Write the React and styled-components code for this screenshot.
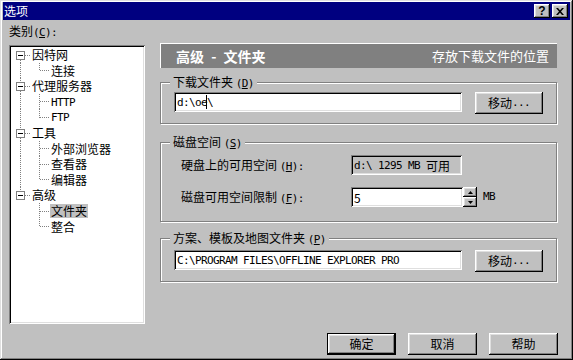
import React from 'react';
import styled, { createGlobalStyle } from 'styled-components';

const GlobalStyle = createGlobalStyle`
  body {
    margin: 0;
    background: #c0c0c0;
    font-family: "Noto Sans CJK SC", "Liberation Sans", sans-serif;
    font-size: 12px;
    color: #000;
  }
`;

const raised = `
  box-shadow: inset -1px -1px #000, inset 1px 1px #fff,
    inset -2px -2px #808080, inset 2px 2px #dfdfdf;
`;

const sunken = `
  box-shadow: inset 1px 1px #808080, inset -1px -1px #fff,
    inset 2px 2px #000, inset -2px -2px #dfdfdf;
`;

const Window = styled.div`
  width: 573px;
  height: 360px;
  box-sizing: border-box;
  padding: 2px 3px 3px 3px;
  background: #c0c0c0;
  box-shadow: inset -1px -1px #000, inset 1px 1px #dfdfdf,
    inset -2px -2px #808080, inset 2px 2px #fff;
  display: flex;
  flex-direction: column;
`;

const TitleBar = styled.div`
  height: 18px;
  display: flex;
  align-items: center;
  background: #000080;
  color: #fff;
  padding-left: 1px;
  line-height: 18px;
`;

const TitleButtons = styled.div`
  margin-left: auto;
  margin-right: 2px;
  display: flex;
  gap: 2px;
`;

const TitleButton = styled.div`
  width: 16px;
  height: 14px;
  background: #c0c0c0;
  ${raised}
  display: flex;
  align-items: center;
  justify-content: center;
  color: #000;
  font-family: "Liberation Sans", sans-serif;
  font-weight: bold;
  font-size: 12px;
  line-height: 14px;
`;

const Body = styled.div`
  display: flex;
  gap: 15px;
  padding-left: 6px;
`;

const LeftCol = styled.div`
  width: 136px;
  display: flex;
  flex-direction: column;
`;

const CatLabel = styled.div`
  margin: 4px 0 5px 0;
  line-height: 14px;
`;

const Tree = styled.div`
  height: 279px;
  box-sizing: border-box;
  padding: 2px;
  background: #fff;
  ${sunken}
`;

const TreeRow = styled.div`
  display: flex;
  align-items: center;
  height: ${(p) => p.$h}px;
`;

const TreeText = styled.span`
  line-height: 14px;
  padding: 0 1px;
  margin-left: -1px;
  background: ${(p) => (p.$selected ? '#c0c0c0' : 'transparent')};
`;

const Mono = styled.span`
  font-family: "DejaVu Sans Mono", "Liberation Mono", "Noto Sans CJK SC", monospace;
  font-size: 11px;
  letter-spacing: -0.62px;
`;

const RightCol = styled.div`
  width: 397px;
  padding-top: 23px;
  display: flex;
  flex-direction: column;
`;

const Header = styled.div`
  height: 25px;
  box-sizing: border-box;
  background: #808080;
  box-shadow: inset 1px 1px #fff;
  color: #fff;
  display: flex;
  align-items: center;
  padding: 0 8px 0 16px;
`;

const HeaderTitle = styled.span`
  font-size: 14px;
  font-weight: bold;
  word-spacing: 4px;
`;

const HeaderNote = styled.span`
  margin-left: auto;
  font-size: 13px;
`;

const Group = styled.div`
  margin-top: ${(p) => p.$top}px;
  border: 1px solid #808080;
  box-shadow: inset 1px 1px #fff, 1px 1px #fff;
  padding: 0 13px ${(p) => p.$bottom}px 13px;
  display: flex;
  flex-direction: column;
`;

const GroupLabel = styled.div`
  width: fit-content;
  margin: -8px 0 0 -4px;
  padding: 0 3px;
  background: #c0c0c0;
  line-height: 14px;
  height: 14px;
`;

const Row = styled.div`
  display: flex;
  align-items: flex-start;
  margin-top: ${(p) => p.$top}px;
  padding-left: ${(p) => p.$indent || 0}px;
`;

const FieldLabel = styled.div`
  width: 170px;
  line-height: 20px;
`;

const Field = styled.div`
  width: ${(p) => p.$w}px;
  height: 20px;
  box-sizing: border-box;
  padding: 0 3px;
  display: flex;
  align-items: center;
  background: ${(p) => (p.$readonly ? '#c0c0c0' : '#fff')};
  ${sunken}
  white-space: pre;
`;

const Caret = styled.span`
  display: inline-block;
  width: 1px;
  height: 14px;
  background: #000;
  margin-left: -1px;
`;

const Button = styled.div`
  width: ${(p) => p.$w || 68}px;
  height: 22px;
  box-sizing: border-box;
  margin-left: ${(p) => p.$gap || 0}px;
  background: #c0c0c0;
  ${raised}
  ${(p) => p.$default && 'border: 1px solid #000;'}
  display: flex;
  align-items: center;
  justify-content: center;
  line-height: 20px;
`;

const Spin = styled.div`
  display: flex;
  flex-direction: column;
`;

const SpinButton = styled.div`
  width: 14px;
  height: 10px;
  box-sizing: border-box;
  background: #c0c0c0;
  ${raised}
  display: flex;
  align-items: center;
  justify-content: center;
`;

const Unit = styled(Mono)`
  margin-left: 6px;
  line-height: 20px;
`;

const Footer = styled.div`
  margin: 51px -1px 0 0;
  display: flex;
  justify-content: flex-end;
  gap: 12px;
`;

const Key = ({ k }) => (
  <Mono>
    (<u>{k}</u>)
  </Mono>
);

const tree = [
  { label: '因特网', children: ['连接'] },
  { label: '代理服务器', children: ['HTTP', 'FTP'] },
  { label: '工具', children: ['外部浏览器', '查看器', '编辑器'] },
  { label: '高级', children: ['文件夹', '整合'] },
];

const dot = { stroke: '#808080', strokeDasharray: '1 1', shapeRendering: 'crispEdges' };

function TopLines({ h, first, last }) {
  const cy = Math.floor(h / 2) + 0.5;
  return (
    <svg width="21" height={h} style={{ flex: 'none' }}>
      {!first && <line x1="9.5" y1="0" x2="9.5" y2={cy - 4.5} style={dot} />}
      {!last && <line x1="9.5" y1={cy + 4.5} x2="9.5" y2={h} style={dot} />}
      <line x1="14" y1={cy} x2="20" y2={cy} style={dot} />
      <rect x="5.5" y={cy - 4} width="8" height="8" fill="#fff" stroke="#808080" shapeRendering="crispEdges" />
      <rect x="7" y={cy - 0.5} width="5" height="1" fill="#000" />
    </svg>
  );
}

function ChildLines({ h, parentLast, lastChild }) {
  const cy = Math.floor(h / 2) + 0.5;
  return (
    <svg width="40" height={h} style={{ flex: 'none' }}>
      {!parentLast && <line x1="9.5" y1="0" x2="9.5" y2={h} style={dot} />}
      <line x1="28.5" y1="0" x2="28.5" y2={lastChild ? cy : h} style={dot} />
      <line x1="29" y1={cy} x2="38" y2={cy} style={dot} />
    </svg>
  );
}

function TreeView() {
  const rows = [];
  let i = 0;
  const rowH = () => {
    const h = Math.round((i + 1) * 15.6) - Math.round(i * 15.6);
    i += 1;
    return h;
  };
  tree.forEach((node, n) => {
    const last = n === tree.length - 1;
    const h = rowH();
    rows.push(
      <TreeRow key={node.label} $h={h}>
        <TopLines h={h} first={n === 0} last={last} />
        <TreeText>{node.label}</TreeText>
      </TreeRow>
    );
    node.children.forEach((c, k) => {
      const ch = rowH();
      const latin = /^[A-Z]+$/.test(c);
      rows.push(
        <TreeRow key={c} $h={ch}>
          <ChildLines h={ch} parentLast={last} lastChild={k === node.children.length - 1} />
          <TreeText $selected={c === '文件夹'}>{latin ? <Mono>{c}</Mono> : c}</TreeText>
        </TreeRow>
      );
    });
  });
  return <Tree>{rows}</Tree>;
}

export default function App() {
  return (
    <>
      <GlobalStyle />
      <Window>
        <TitleBar>
          <span>选项</span>
          <TitleButtons>
            <TitleButton>?</TitleButton>
            <TitleButton>
              <svg width="8" height="7" viewBox="0 0 8 7">
                <path d="M0 0 L2 0 L4 2.2 L6 0 L8 0 L5 3.5 L8 7 L6 7 L4 4.8 L2 7 L0 7 L3 3.5 Z" fill="#000" />
              </svg>
            </TitleButton>
          </TitleButtons>
        </TitleBar>
        <Body>
          <LeftCol>
            <CatLabel>
              类别<Key k="C" />
              <Mono>:</Mono>
            </CatLabel>
            <TreeView />
          </LeftCol>
          <RightCol>
            <Header>
              <HeaderTitle>高级 - 文件夹</HeaderTitle>
              <HeaderNote>存放下载文件的位置</HeaderNote>
            </Header>

            <Group $top={14} $bottom={9}>
              <GroupLabel>
                下载文件夹 <Key k="D" />
              </GroupLabel>
              <Row $top={3}>
                <Field $w={288}>
                  <Mono>d:\oe</Mono>
                  <Caret />
                  <Mono>\</Mono>
                </Field>
                <Button $gap={13}>
                  移动<Mono>...</Mono>
                </Button>
              </Row>
            </Group>

            <Group $top={18} $bottom={12}>
              <GroupLabel>
                磁盘空间 <Key k="S" />
              </GroupLabel>
              <Row $top={6} $indent={7}>
                <FieldLabel>
                  硬盘上的可用空间 <Key k="H" />
                  <Mono>:</Mono>
                </FieldLabel>
                <Field $w={111} $readonly>
                  <Mono>d:\ 1295 MB </Mono>可用
                </Field>
              </Row>
              <Row $top={10} $indent={7}>
                <FieldLabel>
                  磁盘可用空间限制 <Key k="F" />
                  <Mono>:</Mono>
                </FieldLabel>
                <Field $w={112}>5</Field>
                <Spin>
                  <SpinButton>
                    <svg width="5" height="3" viewBox="0 0 5 3">
                      <path d="M2.5 0 L5 3 L0 3 Z" fill="#000" />
                    </svg>
                  </SpinButton>
                  <SpinButton>
                    <svg width="5" height="3" viewBox="0 0 5 3">
                      <path d="M0 0 L5 0 L2.5 3 Z" fill="#000" />
                    </svg>
                  </SpinButton>
                </Spin>
                <Unit>MB</Unit>
              </Row>
            </Group>

            <Group $top={16} $bottom={9}>
              <GroupLabel>
                方案、模板及地图文件夹 <Key k="P" />
              </GroupLabel>
              <Row $top={5}>
                <Field $w={288}>
                  <Mono>C:\PROGRAM FILES\OFFLINE EXPLORER PRO</Mono>
                </Field>
                <Button $gap={13}>
                  移动<Mono>...</Mono>
                </Button>
              </Row>
            </Group>

            <Footer>
              <Button $w={69} $default>确定</Button>
              <Button $w={69}>取消</Button>
              <Button $w={69}>帮助</Button>
            </Footer>
          </RightCol>
        </Body>
      </Window>
    </>
  );
}
